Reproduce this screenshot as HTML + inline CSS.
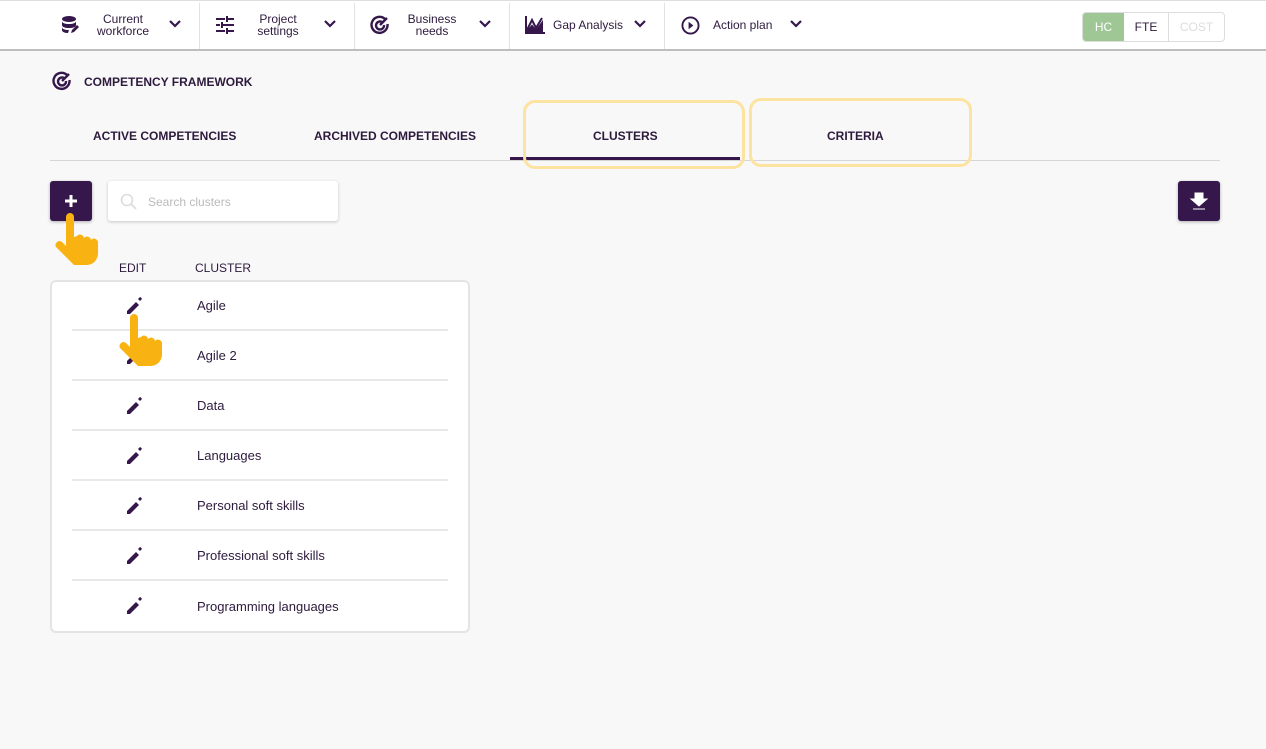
<!DOCTYPE html>
<html><head><style>
*{box-sizing:border-box;margin:0;padding:0}
body{width:1266px;height:749px;background:#f8f8f8;font-family:"Liberation Sans",sans-serif;color:#2d1a3d;position:relative;overflow:hidden}
.nav{position:absolute;left:0;top:0;width:1266px;height:51px;background:#fff;border-top:1px solid #ddd;border-bottom:2px solid #bdbdbd}
.ni{position:absolute;top:0;height:48px;display:flex;align-items:center;font-size:12px;color:#2d1a3d}
.sep{position:absolute;top:2px;width:1px;height:46px;background:#e2e2e2}
.lbl{text-align:center;line-height:12px}
.ab{position:absolute}
.tab{position:absolute;top:129px;font-size:12px;font-weight:bold;color:#2d1a3d}
.hl{position:absolute;border:3px solid #fde3a0;border-radius:12px}
.row{position:absolute;left:72px;width:376px;height:50px;border-bottom:2px solid #e8e8e8}
.row span{position:absolute;left:125px;top:17px;font-size:13px;color:#2d1a3d}
.row svg{position:absolute;left:54px;top:16px}
</style></head><body>
<div class="nav">
 <div class="ni" style="left:60px"><svg width="20" height="20" viewBox="0 0 20 20"><ellipse cx="9" cy="4" rx="7" ry="3" fill="#35174b"/><path d="M2 6v4c0 2 3 3 7 3s7-1 7-3V6c0 2-3 3-7 3S2 8 2 6z" fill="#35174b"/><path d="M2 12v3c0 2 3 3 6 3l1-3c-4 0-7-1-7-3z" fill="#35174b"/><path d="M11 18l1-3 5-5 2 2-5 5z" fill="#35174b"/></svg></div>
 <div class="ni lbl" style="left:95px;width:56px;justify-content:center">Current<br>workforce</div>
 <div class="ni" style="left:168px">⌄</div>
 <div class="sep" style="left:199px"></div>
 <div class="ni" style="left:216px"><svg width="18" height="18" viewBox="0 0 18 18" fill="#35174b"><rect x="0" y="2" width="9" height="2"/><rect x="12" y="2" width="6" height="2"/><rect x="10" y="0" width="2" height="6"/><rect x="0" y="8" width="4" height="2"/><rect x="7" y="8" width="11" height="2"/><rect x="5" y="6" width="2" height="6"/><rect x="0" y="14" width="9" height="2"/><rect x="12" y="14" width="6" height="2"/><rect x="10" y="12" width="2" height="6"/></svg></div>
 <div class="ni lbl" style="left:250px;width:56px;justify-content:center">Project<br>settings</div>
 <div class="sep" style="left:354px"></div>
 <div class="ni" style="left:370px"><svg width="20" height="20" viewBox="0 0 20 20" fill="none" stroke="#35174b" stroke-width="2.4"><path d="M15 4A8 8 0 1 0 17.5 9"/><path d="M12 7A4 4 0 1 0 14 10"/><path d="M10 10L17 3"/></svg></div>
 <div class="ni lbl" style="left:404px;width:56px;justify-content:center">Business<br>needs</div>
 <div class="sep" style="left:509px"></div>
 <div class="ni" style="left:525px"><svg width="20" height="18" viewBox="0 0 20 18" fill="none" stroke="#35174b" stroke-width="2"><path d="M1 0v17h19"/><path d="M2 14l5-10 4 8 6-10"/><path d="M2 16l5-6 4 5 6-8v9H2z" fill="#35174b"/></svg></div>
 <div class="ni" style="left:553px">Gap Analysis</div>
 <div class="sep" style="left:664px"></div>
 <div class="ni" style="left:681px"><svg width="19" height="19" viewBox="0 0 20 20"><circle cx="10" cy="10" r="8.5" fill="none" stroke="#35174b" stroke-width="2"/><path d="M8 6l5 4-5 4z" fill="#35174b"/></svg></div>
 <div class="ni" style="left:713px">Action plan</div>
 <div class="ab" style="left:1082px;top:11px;width:143px;height:30px;border:1px solid #ddd;border-radius:4px;display:flex;font-size:12px;overflow:hidden">
  <div style="width:41px;background:#9ec795;color:#fff;display:flex;align-items:center;justify-content:center">HC</div>
  <div style="width:45px;border-right:1px solid #ddd;display:flex;align-items:center;justify-content:center;color:#2d1a3d">FTE</div>
  <div style="flex:1;display:flex;align-items:center;justify-content:center;color:#ddd">COST</div>
 </div>
</div>
<svg class="ab" style="left:168px;top:19px" width="14" height="10" viewBox="0 0 14 10"><path d="M2 2l5 5 5-5" fill="none" stroke="#35174b" stroke-width="2.2"/></svg>
<svg class="ab" style="left:323px;top:19px" width="14" height="10" viewBox="0 0 14 10"><path d="M2 2l5 5 5-5" fill="none" stroke="#35174b" stroke-width="2.2"/></svg>
<svg class="ab" style="left:478px;top:19px" width="14" height="10" viewBox="0 0 14 10"><path d="M2 2l5 5 5-5" fill="none" stroke="#35174b" stroke-width="2.2"/></svg>
<svg class="ab" style="left:633px;top:19px" width="14" height="10" viewBox="0 0 14 10"><path d="M2 2l5 5 5-5" fill="none" stroke="#35174b" stroke-width="2.2"/></svg>
<svg class="ab" style="left:789px;top:19px" width="14" height="10" viewBox="0 0 14 10"><path d="M2 2l5 5 5-5" fill="none" stroke="#35174b" stroke-width="2.2"/></svg>
<style>.nav .ni:nth-child(3),.nav .ni:nth-child(3){display:none}</style>

<svg class="ab" style="left:52px;top:71px" width="20" height="20" viewBox="0 0 20 20" fill="none" stroke="#35174b" stroke-width="2.4"><path d="M15 4A8 8 0 1 0 17.5 9"/><path d="M12 7A4 4 0 1 0 14 10"/><path d="M10 10L17 3"/></svg>
<div class="ab" style="left:84px;top:75px;font-size:12px;font-weight:bold">COMPETENCY FRAMEWORK</div>

<div class="tab" style="left:93px">ACTIVE COMPETENCIES</div>
<div class="tab" style="left:314px">ARCHIVED COMPETENCIES</div>
<div class="tab" style="left:593px">CLUSTERS</div>
<div class="tab" style="left:827px">CRITERIA</div>
<div class="ab" style="left:50px;top:160px;width:1170px;height:1px;background:#d6d6d6"></div>
<div class="ab" style="left:510px;top:157px;width:230px;height:3px;background:#35174b"></div>
<div class="hl" style="left:523px;top:100px;width:222px;height:69px"></div>
<div class="hl" style="left:749px;top:98px;width:223px;height:69px"></div>

<div class="ab" style="left:50px;top:181px;width:42px;height:40px;background:#35174b;border-radius:3px;box-shadow:0 1px 3px rgba(0,0,0,.3)"><svg width="42" height="40"><path d="M21 14v12M15 20h12" stroke="#fff" stroke-width="3"/></svg></div>
<div class="ab" style="left:108px;top:181px;width:230px;height:40px;background:#fff;border-radius:3px;box-shadow:0 1px 3px rgba(0,0,0,.2)"><svg class="ab" style="left:12px;top:12px" width="18" height="18"><circle cx="7" cy="7" r="5.5" fill="none" stroke="#ddd" stroke-width="1.6"/><path d="M11 11l5 5" stroke="#ddd" stroke-width="1.8"/></svg><span class="ab" style="left:40px;top:14px;font-size:12px;color:#bbb">Search clusters</span></div>
<div class="ab" style="left:1178px;top:181px;width:42px;height:40px;background:#35174b;border-radius:3px;box-shadow:0 1px 3px rgba(0,0,0,.3)"><svg width="42" height="40"><path d="M17 12h8v6h4l-8 7-8-7h4z M15 28h12" fill="#fff" stroke="#fff" stroke-width="1"/></svg></div>

<div class="ab" style="left:119px;top:261px;font-size:12px">EDIT</div>
<div class="ab" style="left:195px;top:261px;font-size:12px">CLUSTER</div>

<div class="ab" style="left:50px;top:280px;width:420px;height:353px;background:#fff;border:2px solid #e4e4e4;border-radius:6px"></div>
<svg width="0" height="0" style="position:absolute"><defs><symbol id="pen" viewBox="0 0 18 18"><path d="M1 14v3h3l9-9-3-3z M14 4l-2-2 1.5-1.5a1 1 0 0 1 1.4 0l.6.6a1 1 0 0 1 0 1.4z" fill="#35174b"/></symbol></defs></svg>
<div class="row" style="top:281px"><svg width="18" height="18"><use href="#pen"/></svg><span>Agile</span></div>
<div class="row" style="top:331px"><svg width="18" height="18"><use href="#pen"/></svg><span>Agile 2</span></div>
<div class="row" style="top:381px"><svg width="18" height="18"><use href="#pen"/></svg><span>Data</span></div>
<div class="row" style="top:431px"><svg width="18" height="18"><use href="#pen"/></svg><span>Languages</span></div>
<div class="row" style="top:481px"><svg width="18" height="18"><use href="#pen"/></svg><span>Personal soft skills</span></div>
<div class="row" style="top:531px"><svg width="18" height="18"><use href="#pen"/></svg><span>Professional soft skills</span></div>
<div class="row" style="top:581px;border-bottom:none"><svg width="18" height="18"><use href="#pen"/></svg><span style="top:18px">Programming languages</span></div>

<svg class="ab" style="left:54px;top:213px" width="52" height="54" viewBox="0 0 52 54"><path d="M12 4a4 4 0 0 1 8 0v20l3-1a4 4 0 0 1 7 2a4 4 0 0 1 7 2a4 4 0 0 1 7 3v10c0 6-4 12-12 12H20L2 34a4 4 0 0 1 6-5l4 4z" fill="#f8b211"/></svg>
<svg class="ab" style="left:118px;top:314px" width="52" height="54" viewBox="0 0 52 54"><path d="M12 4a4 4 0 0 1 8 0v20l3-1a4 4 0 0 1 7 2a4 4 0 0 1 7 2a4 4 0 0 1 7 3v10c0 6-4 12-12 12H20L2 34a4 4 0 0 1 6-5l4 4z" fill="#f8b211"/></svg>
</body></html>
